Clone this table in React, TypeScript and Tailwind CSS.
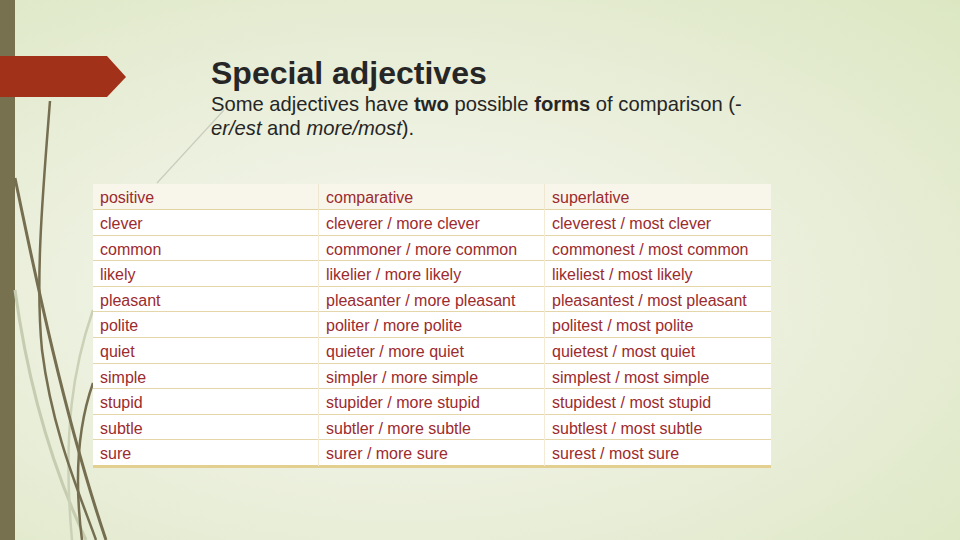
import React from "react";

const rows: [string, string, string][] = [
  ["clever", "cleverer / more clever", "cleverest / most clever"],
  ["common", "commoner / more common", "commonest / most common"],
  ["likely", "likelier / more likely", "likeliest / most likely"],
  ["pleasant", "pleasanter / more pleasant", "pleasantest / most pleasant"],
  ["polite", "politer / more polite", "politest / most polite"],
  ["quiet", "quieter / more quiet", "quietest / most quiet"],
  ["simple", "simpler / more simple", "simplest / most simple"],
  ["stupid", "stupider / more stupid", "stupidest / most stupid"],
  ["subtle", "subtler / more subtle", "subtlest / most subtle"],
  ["sure", "surer / more sure", "surest / most sure"],
];

function Decorations() {
  return (
    <svg
      className="absolute inset-0 pointer-events-none"
      width="960"
      height="540"
      viewBox="0 0 960 540"
    >
      {/* light stems */}
      <path d="M15 290 C 30 400, 58 480, 86 540" stroke="#c6ccb0" strokeWidth="3" fill="none" />
      <path d="M93 310 C 74 365, 62 430, 72 540" stroke="#cbd1b6" strokeWidth="2.5" fill="none" />
      <path d="M157 183 L 224 110" stroke="#c9cdbd" strokeWidth="1.2" fill="none" />
      {/* dark stems */}
      <path d="M15 178 C 30 250, 62 410, 106 540" stroke="#756e50" strokeWidth="3" fill="none" />
      <path d="M50 101 C 43 190, 35 280, 42 350 C 52 430, 78 490, 96 540" stroke="#756e50" strokeWidth="2.5" fill="none" />
      <path d="M93 383 C 80 420, 73 470, 82 540" stroke="#756e50" strokeWidth="2.5" fill="none" />
      {/* red arrow */}
      <polygon points="0,56 107,56 126,77 107,97 0,97" fill="#a2311a" />
    </svg>
  );
}

function Row({ cells, head }: { cells: [string, string, string]; head?: boolean }) {
  return (
    <div
      className={
        head
          ? "grid grid-cols-3 h-[26px] bg-[#f8f5ea] border-b border-[#e2d3a2]"
          : "grid grid-cols-3 h-[25.6px] bg-white border-b border-[#e4d6a8]"
      }
    >
      <div className={head ? "pl-[7px] pt-[2px] border-r border-[#efe7cf]" : "pl-[7px] pt-[2px] border-r border-[#f3ebd6]"}>
        {cells[0]}
      </div>
      <div className={head ? "pl-[7px] pt-[2px] border-r border-[#efe7cf]" : "pl-[7px] pt-[2px] border-r border-[#f3ebd6]"}>
        {cells[1]}
      </div>
      <div className="pl-[7px] pt-[2px]">{cells[2]}</div>
    </div>
  );
}

export default function App() {
  return (
    <div className="relative w-[960px] h-[540px] overflow-hidden flex bg-[radial-gradient(ellipse_at_42%_55%,#f7f8f1_0%,#e9eed9_55%,#dce7c2_100%)] font-['Liberation_Sans',Arial,sans-serif]">
      <div className="w-[15px] shrink-0 bg-[#78714f]" />
      <Decorations />

      <div className="relative flex-1 pl-[78px] pt-[57px]">
        <div className="pl-[118px] text-[#262626]">
          <h1 className="text-[32px] leading-[32px] font-bold">Special adjectives</h1>
          <p className="mt-[3px] text-[20.2px] leading-[24px] w-[560px]">
            Some adjectives have <b>two</b> possible <b>forms</b> of comparison (-
            <br />
            <i>er/est</i> and <i>more/most</i>).
          </p>
        </div>

        <div className="mt-[44px] w-[678px] text-[16px] text-[#9c2b2e]">
          <Row head cells={["positive", "comparative", "superlative"]} />
          {rows.map((r, i) =>
            i === rows.length - 1 ? (
              <div key={r[0]} className="grid grid-cols-3 h-[24.6px] bg-white">
                <div className="pl-[7px] pt-[2px] border-r border-[#f3ebd6]">{r[0]}</div>
                <div className="pl-[7px] pt-[2px] border-r border-[#f3ebd6]">{r[1]}</div>
                <div className="pl-[7px] pt-[2px]">{r[2]}</div>
              </div>
            ) : (
              <Row key={r[0]} cells={r} />
            ),
          )}
          <div className="h-[3px] bg-[#e3cf8f]" />
        </div>
      </div>
    </div>
  );
}
